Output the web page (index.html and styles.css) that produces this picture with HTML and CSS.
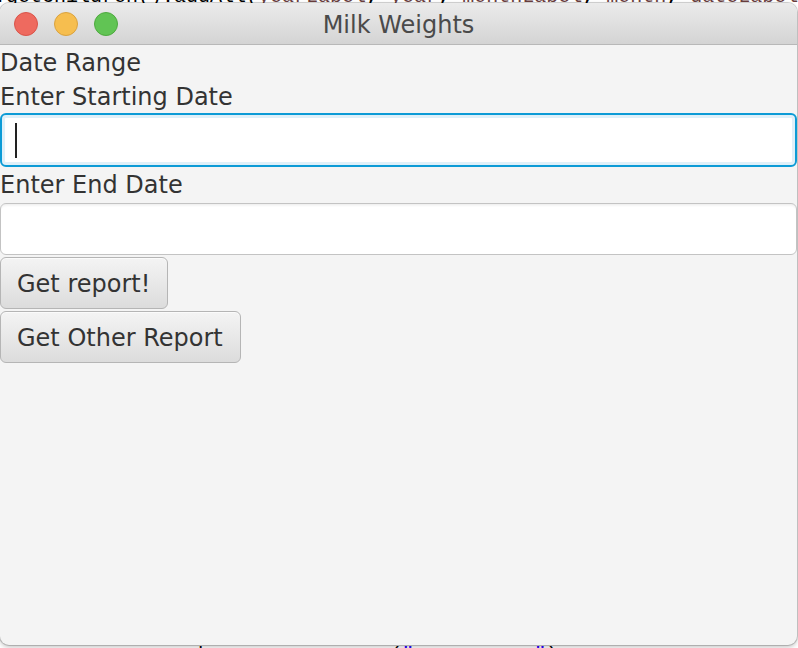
FILE: index.html
```html
<!DOCTYPE html>
<html lang="en">
<head>
<meta charset="utf-8">
<title>Milk Weights</title>
<link rel="stylesheet" href="styles.css">
</head>
<body>
<div class="desktop">
  <pre class="code code-top"><span class="plain">.getChildren().addAll(</span><span class="var">yearLabel</span><span class="plain">, </span><span class="var">year</span><span class="plain">, </span><span class="var">monthLabel</span><span class="plain">, </span><span class="var">month</span><span class="plain">, </span><span class="var">dateLabel</span><span class="plain">);</span></pre>
  <pre class="code code-bottom"><span class="plain">        </span><span class="var">Button</span><span class="plain"> </span><span class="plain">other</span><span class="plain"> = </span><span class="kw">new</span><span class="plain"> Button(</span><span class="str">"Get Report"</span><span class="plain">);</span></pre>

  <div class="window">
    <div class="titlebar">
      <div class="lights">
        <span class="light red"></span>
        <span class="light yellow"></span>
        <span class="light green"></span>
      </div>
      <div class="title">Milk Weights</div>
      <div class="spacer"></div>
    </div>
    <div class="content">
      <div class="label">Date Range</div>
      <div class="label">Enter Starting Date</div>
      <div class="field focused"><span class="caret"></span></div>
      <div class="label">Enter End Date</div>
      <div class="field plain-field"></div>
      <button class="btn" type="button">Get report!</button>
      <button class="btn" type="button">Get Other Report</button>
    </div>
  </div>
</div>
</body>
</html>
```

FILE: styles.css
```css
html, body {
  margin: 0;
  padding: 0;
}

body {
  width: 798px;
  height: 648px;
  overflow: hidden;
  background: #ffffff;
}

.desktop {
  position: relative;
  width: 798px;
  height: 648px;
  overflow: hidden;
  background: #ffffff;
}

/* editor text behind the window */
.code {
  position: absolute;
  left: -6px;
  margin: 0;
  font-family: "Liberation Mono", "DejaVu Sans Mono", monospace;
  font-size: 20px;
  line-height: 24px;
  white-space: pre;
  color: #000000;
}

.code-top {
  top: -15px;
}

.code-bottom {
  top: 644px;
}

.code .var {
  color: #6a3e3e;
}

.code .kw {
  color: #7f0055;
  font-weight: bold;
}

.code .str {
  color: #2a00ff;
}

/* window */
.window {
  position: absolute;
  left: 0;
  top: 3px;
  width: 797px;
  height: 642px;
  border-radius: 9px;
  background: #f4f4f4;
  box-shadow: 0 0 0 1px rgba(0, 0, 0, 0.16), 0 2px 5px rgba(0, 0, 0, 0.25);
  overflow: hidden;
  display: flex;
  flex-direction: column;
}

.titlebar {
  height: 41px;
  flex: none;
  border-bottom: 1px solid #b8b8b8;
  background: linear-gradient(#ebebeb, #d4d4d4);
  display: grid;
  grid-template-columns: 1fr auto 1fr;
  align-items: center;
}

.lights {
  display: flex;
  gap: 16px;
  padding-left: 14px;
}

.light {
  width: 24px;
  height: 24px;
  box-sizing: border-box;
  border-radius: 50%;
  border: 1px solid transparent;
}

.light.red {
  background: #ee6a5f;
  border-color: #d9544a;
}

.light.yellow {
  background: #f6be4f;
  border-color: #d9a23f;
}

.light.green {
  background: #61c454;
  border-color: #4ea93f;
}

.title {
  font-family: "DejaVu Sans", sans-serif;
  font-size: 24px;
  line-height: 38px;
  padding-top: 3px;
  color: #4a4a4a;
  white-space: nowrap;
}

.content {
  flex: 1;
  display: flex;
  flex-direction: column;
  align-items: flex-start;
  font-family: "DejaVu Sans", sans-serif;
  font-size: 24px;
  color: #333333;
}

.label {
  box-sizing: border-box;
  height: 34px;
  line-height: 32px;
  padding-top: 2px;
  white-space: nowrap;
}

.field {
  align-self: stretch;
  box-sizing: border-box;
  border-radius: 6px;
  background: #ffffff;
}

.field.focused {
  height: 54px;
  border: 2px solid #0c9bd6;
  box-shadow: inset 0 0 0 3px #dff0f9;
  padding-left: 13px;
  display: flex;
  align-items: center;
}

.caret {
  width: 2px;
  height: 35px;
  background: #222222;
}

.field.plain-field {
  margin-top: 2px;
  height: 52px;
  border: 1px solid #c3c3c3;
  box-shadow: inset 0 3px 3px -2px rgba(0, 0, 0, 0.09);
}

.btn {
  margin: 2px 0 0;
  box-sizing: border-box;
  height: 52px;
  padding: 2px 17px 0 16px;
  border: 1px solid #b5b5b5;
  border-radius: 6px;
  background: linear-gradient(#f4f4f4, #dcdcdc);
  box-shadow: inset 0 1px 0 #fbfbfb;
  font-family: "DejaVu Sans", sans-serif;
  font-size: 24px;
  line-height: 48px;
  color: #333333;
  white-space: nowrap;
  text-align: left;
}
```
